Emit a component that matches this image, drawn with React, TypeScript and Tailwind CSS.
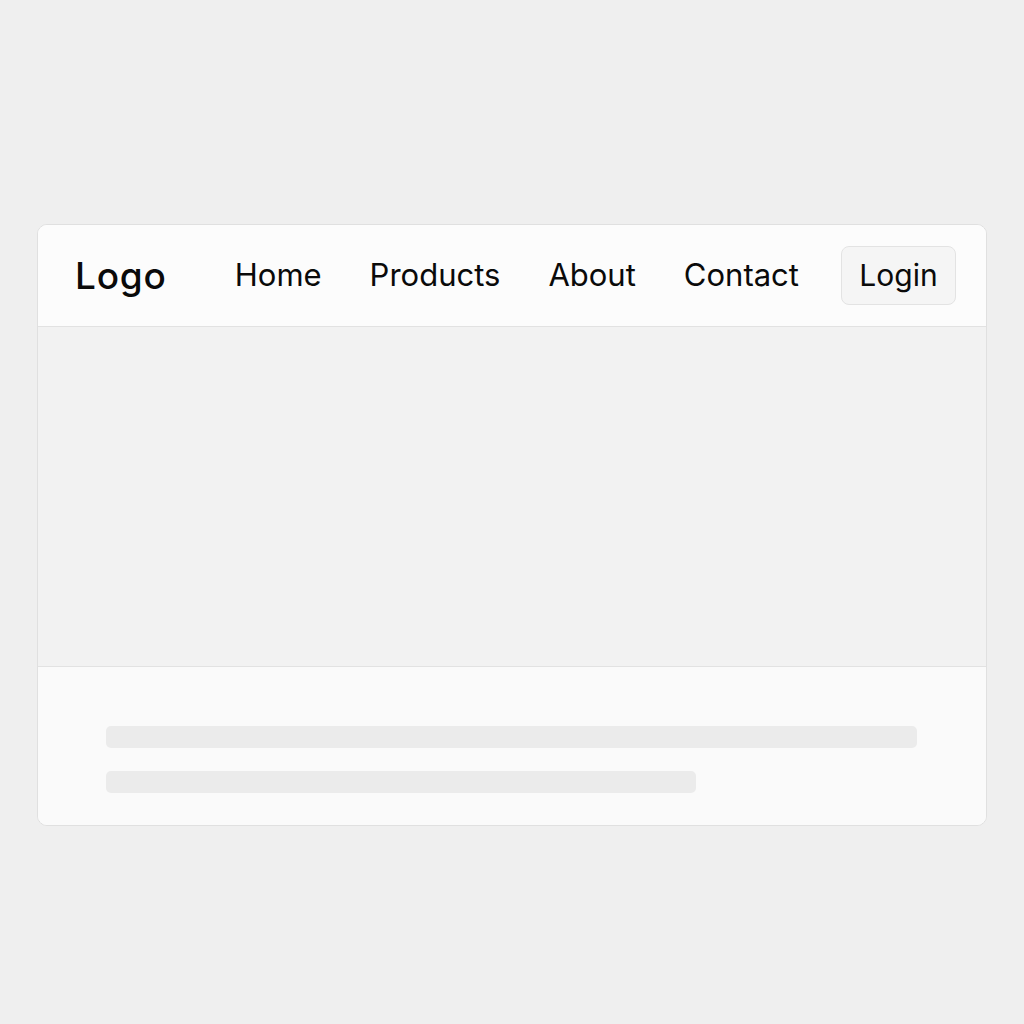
import React from "react";

export default function App() {
  return (
    <div className="min-h-[1024px] w-full bg-[#efefef] pt-[224px]" style={{ fontFamily: "Inter, 'Noto Sans', sans-serif" }}>
      <div className="mx-[37px] w-[950px] overflow-hidden rounded-[10px] border border-[#e0e0e0] bg-[#fbfbfb]">
        <header className="flex h-[102px] items-center border-b border-[#e2e2e2] bg-[#fcfcfc] pl-[37px] pr-[30px]">
          <div className="text-[37px] font-medium tracking-[0.8px] text-[#0a0a0a]">Logo</div>
          <nav className="ml-[68px] flex items-center gap-[48px] text-[31px] text-[#0a0a0a]">
            <span>Home</span>
            <span>Products</span>
            <span>About</span>
            <span>Contact</span>
          </nav>
          <button className="ml-auto flex h-[59px] w-[115px] items-center justify-center rounded-[8px] border border-[#e3e3e3] bg-[#f5f5f5] text-[30px] text-[#0a0a0a]">
            Login
          </button>
        </header>
        <div className="h-[340px] border-b border-[#e2e2e2] bg-[#f2f2f2]" />
        <div className="flex h-[158px] flex-col gap-[23px] bg-[#fafafa] pl-[68px] pr-[69px] pt-[59px]">
          <div className="h-[22px] w-full rounded-[5px] bg-[#ebebeb]" />
          <div className="h-[22px] w-[590px] rounded-[5px] bg-[#ebebeb]" />
        </div>
      </div>
    </div>
  );
}
